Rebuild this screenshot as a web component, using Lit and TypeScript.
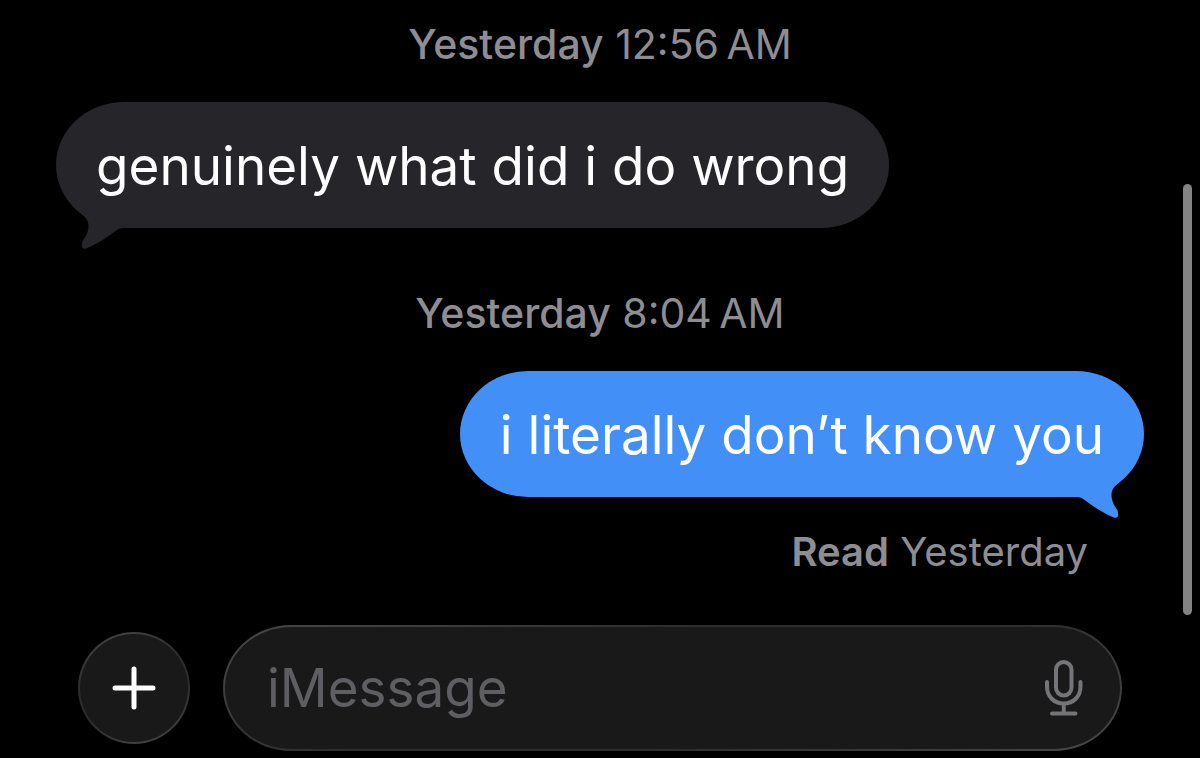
import { LitElement, html, css, svg } from "lit";
import { customElement, property } from "lit/decorators.js";

@customElement("chat-bubble")
class ChatBubble extends LitElement {
  @property({ reflect: true }) side: "in" | "out" = "in";

  static styles = css`
    :host {
      display: block;
      position: relative;
      max-width: 80%;
      box-sizing: border-box;
      padding: 26px 40px 24px;
      border-radius: 68px / 63px;
      background: var(--bubble);
      color: #fff;
      font-size: 53px;
      line-height: 76px;
    }
    :host([side="in"]) {
      --bubble: #26252a;
    }
    :host([side="out"]) {
      --bubble: #438ff8;
    }
    .tail {
      position: absolute;
      left: 20px;
      bottom: -24px;
      width: 60px;
      height: 54px;
      fill: var(--bubble);
    }
    :host([side="out"]) .tail {
      left: auto;
      right: 20px;
      transform: scaleX(-1);
    }
    .text {
      position: relative;
    }
  `;

  render() {
    return html`
      <svg class="tail" viewBox="0 0 60 54" aria-hidden="true">
        ${svg`<path d="M2 12.500C8 18.500 12.500 20.500 12.500 28C12.500 35 9 39 6.500 43.500C4.800 48 6 52 10 50.500C23 45.500 33 37.500 42 31.200C45 29.800 48 30 54 30V8Z"/>`}
      </svg>
      <span class="text"><slot></slot></span>
    `;
  }
}

@customElement("app-root")
class AppRoot extends LitElement {
  static styles = css`
    :host {
      display: flex;
      flex-direction: column;
      position: relative;
      box-sizing: border-box;
      min-height: 100vh;
      padding: 19px 56px 7px;
      background: #000;
      color: #8e8d93;
      font-family: Inter, "Liberation Sans", sans-serif;
      font-size: 41px;
      line-height: 50px;
    }
    .thread {
      flex: 1;
      display: flex;
      flex-direction: column;
    }
    .stamp {
      align-self: center;
      white-space: nowrap;
    }
    .day {
      font-weight: 500;
    }
    .incoming {
      align-self: flex-start;
      margin: 33px 0 60px;
    }
    .outgoing {
      align-self: flex-end;
      margin: 33px 0 30px;
    }
    .receipt {
      align-self: flex-end;
      padding-right: 56px;
      font-size: 40px;
    }
    .read {
      font-weight: 600;
    }
    .composer {
      display: flex;
      align-items: center;
      gap: 33px;
      margin: 0 22px;
    }
    .add,
    .field {
      box-sizing: border-box;
      border: 2px solid transparent;
      background:
        linear-gradient(#191919, #191919) padding-box,
        linear-gradient(160deg, #484848, #2c2c2c 40%, #2c2c2c 60%, #484848) border-box;
    }
    .add {
      flex: none;
      display: grid;
      place-items: center;
      width: 112px;
      height: 112px;
      padding: 0;
      border-radius: 50%;
    }
    .plus {
      width: 44px;
      height: 44px;
      stroke: #fff;
      stroke-width: 5;
      stroke-linecap: round;
    }
    .field {
      flex: 1;
      min-width: 0;
      display: flex;
      align-items: center;
      height: 126px;
      padding: 0 36px 0 42px;
      border-radius: 68px / 63px;
    }
    .entry {
      flex: 1;
      min-width: 0;
      height: 76px;
      padding: 0;
      border: 0;
      outline: 0;
      background: none;
      color: #fff;
      font: inherit;
      font-size: 53px;
    }
    .entry::placeholder {
      color: #5f5e63;
      opacity: 1;
    }
    .dictate {
      flex: none;
      display: block;
      padding: 0;
      border: 0;
      background: none;
    }
    .mic {
      display: block;
      width: 40px;
      height: 56px;
      fill: none;
      stroke: #757579;
      stroke-width: 4;
      stroke-linecap: round;
    }
    .scrollbar {
      position: absolute;
      top: 184px;
      right: 8px;
      bottom: 143px;
      width: 9px;
      border-radius: 5px;
      background: #838383;
    }
  `;

  render() {
    return html`
      <main class="thread">
        <time class="stamp"><span class="day">Yesterday</span> 12:56\u202FAM</time>
        <chat-bubble class="incoming" side="in">genuinely what did i do wrong</chat-bubble>
        <time class="stamp"><span class="day">Yesterday</span> 8:04\u202FAM</time>
        <chat-bubble class="outgoing" side="out">i literally don’t know you</chat-bubble>
        <div class="receipt"><span class="read">Read</span> Yesterday</div>
      </main>
      <form class="composer" @submit=${(e: Event) => e.preventDefault()}>
        <button class="add" type="button" aria-label="Add attachment">
          <svg class="plus" viewBox="0 0 44 44" aria-hidden="true">
            <path d="M22 3V41M3 22H41" />
          </svg>
        </button>
        <div class="field">
          <input class="entry" type="text" aria-label="Message" placeholder="iMessage" />
          <button class="dictate" type="button" aria-label="Dictate">
            <svg class="mic" viewBox="0 0 40 56" aria-hidden="true">
              <rect x="12" y="2" width="15.500" height="33.500" rx="7.750" />
              <path d="M3 22V26.500C3 36.500 10 43.500 19.750 43.500S36.500 36.500 36.500 26.500V22M19.750 44V53M8 53.500H31.500" />
            </svg>
          </button>
        </div>
      </form>
      <div class="scrollbar" aria-hidden="true"></div>
    `;
  }
}
